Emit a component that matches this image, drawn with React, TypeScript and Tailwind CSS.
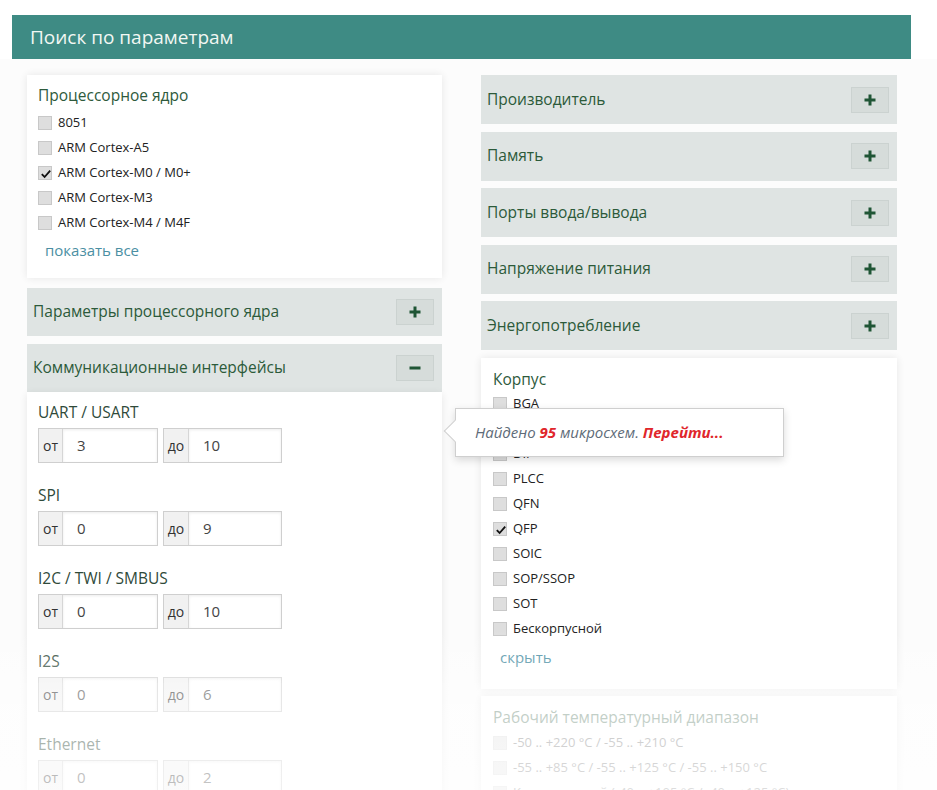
import React from 'react';

const font = { fontFamily: '"Open Sans", "Noto Sans", Arial, sans-serif' };

function Checkbox({ checked = false, faded = false }: { checked?: boolean; faded?: boolean }) {
  return (
    <span
      className={`relative inline-block w-[14px] h-[14px] shrink-0 border ${
        faded ? 'border-[#e0e0e0] bg-[#e8e8e8]' : 'border-[#c8c8c8] bg-[#dedede]'
      }`}
    >
      {checked && (
        <svg viewBox="0 0 14 14" className="absolute left-0 top-0 w-[14px] h-[14px]">
          <path d="M2.8 7.2 L5.6 10 L11.2 3.6" fill="none" stroke="#111" strokeWidth="1.8" />
        </svg>
      )}
    </span>
  );
}

function CheckItem({ label, checked, faded }: { label: string; checked?: boolean; faded?: boolean }) {
  return (
    <div className="flex items-center h-[25px] gap-[6px]">
      <Checkbox checked={checked} faded={faded} />
      <span className={`text-[13px] ${faded ? 'text-[#8f8f8f]' : 'text-[#222]'}`}>{label}</span>
    </div>
  );
}

function Bar({ title, open = false, h = 'h-[49px]' }: { title: string; open?: boolean; h?: string }) {
  return (
    <div className={`shrink-0 flex items-center justify-between bg-[#dfe4e3] ${h} pl-[6px] pr-[8px]`}>
      <span className="text-[15.5px] text-[#2c5a3a]">{title}</span>
      <button className="w-[38px] h-[26px] flex items-center justify-center bg-[#d6dcda] border border-[#cbd2d0]">
        <svg viewBox="0 0 12 12" className="w-[12px] h-[12px]">
          {!open && <rect x="4.5" y="0.5" width="3" height="11" fill="#1f5535" />}
          <rect x="0.5" y="4.5" width="11" height="3" fill="#1f5535" />
        </svg>
      </button>
    </div>
  );
}

function RangeRow({ label, from, to }: { label: string; from: string; to: string }) {
  return (
    <div className="pt-[9px]">
      <div className="text-[15.5px] leading-[20px] text-[#2f4a3a] h-[26px]">{label}</div>
      <div className="flex gap-[5px] pb-[13px]">
        <div className="flex h-[35px] w-[120px] border border-[#cfcfcf]">
          <span className="w-[24px] bg-[#f1f1f1] border-r border-[#d6d6d6] text-[14px] text-[#333] flex items-center justify-center">от</span>
          <span className="flex-1 bg-white shadow-[inset_0_1px_3px_rgba(0,0,0,0.08)] text-[15px] text-[#444] flex items-center pl-[14px]">{from}</span>
        </div>
        <div className="flex h-[35px] w-[119px] border border-[#cfcfcf]">
          <span className="w-[25px] bg-[#f1f1f1] border-r border-[#d6d6d6] text-[14px] text-[#333] flex items-center justify-center">до</span>
          <span className="flex-1 bg-white shadow-[inset_0_1px_3px_rgba(0,0,0,0.08)] text-[15px] text-[#444] flex items-center pl-[14px]">{to}</span>
        </div>
      </div>
    </div>
  );
}

export default function App() {
  return (
    <div style={font} className="relative w-[937px] h-[790px] overflow-hidden bg-white">
      <div className="ml-[12px] mt-[15px] w-[899px] h-[44px] bg-[#3e8b84] flex items-center pl-[18px]">
        <span className="text-[19px] text-[#f2f7f3]">Поиск по параметрам</span>
      </div>

      <div className="flex pl-[27px] gap-[39px] pt-[16px] bg-[#fcfcfc] h-[731px] overflow-hidden">
        {/* left column */}
        <div className="w-[415px] flex flex-col">
          <div className="shrink-0 bg-white shadow-[0_0_8px_rgba(0,0,0,0.09)] h-[203px] pl-[11px] pt-[8px]">
            <div className="text-[15.5px] text-[#2e5a3c] h-[27px] leading-[24px]">Процессорное ядро</div>
            <CheckItem label="8051" />
            <CheckItem label="ARM Cortex-A5" />
            <CheckItem label="ARM Cortex-M0 / M0+" checked />
            <CheckItem label="ARM Cortex-M3" />
            <CheckItem label="ARM Cortex-M4 / M4F" />
            <div className="pl-[7px] pt-[3px] text-[15px] text-[#4b8fa3] h-[25px] leading-[25px]">показать все</div>
          </div>

          <div className="shrink-0 mt-[10px]">
            <Bar title="Параметры процессорного ядра" h="h-[48px]" />
          </div>
          <div className="shrink-0 mt-[8px]">
            <Bar title="Коммуникационные интерфейсы" open h="h-[48px]" />
          </div>
          <div className="shrink-0 bg-white shadow-[0_2px_8px_rgba(0,0,0,0.09)] pl-[11px] pt-[1px] pb-[40px]">
            <RangeRow label="UART / USART" from="3" to="10" />
            <RangeRow label="SPI" from="0" to="9" />
            <RangeRow label="I2C / TWI / SMBUS" from="0" to="10" />
            <RangeRow label="I2S" from="0" to="6" />
            <RangeRow label="Ethernet" from="0" to="2" />
          </div>
        </div>

        {/* right column */}
        <div className="w-[416px] flex flex-col gap-[7.5px]">
          <Bar title="Производитель" />
          <Bar title="Память" />
          <Bar title="Порты ввода/вывода" />
          <Bar title="Напряжение питания" />
          <Bar title="Энергопотребление" />
          <div className="shrink-0 bg-white shadow-[0_0_8px_rgba(0,0,0,0.09)] h-[331px] pl-[12px] pt-[9px]">
            <div className="text-[15.5px] text-[#2e5a3c] h-[25px] leading-[24px]">Корпус</div>
            <CheckItem label="BGA" />
            <CheckItem label="CSP" />
            <CheckItem label="DIP" />
            <CheckItem label="PLCC" />
            <CheckItem label="QFN" />
            <CheckItem label="QFP" checked />
            <CheckItem label="SOIC" />
            <CheckItem label="SOP/SSOP" />
            <CheckItem label="SOT" />
            <CheckItem label="Бескорпусной" />
            <div className="pl-[7px] pt-[3px] text-[15px] text-[#4b8fa3] h-[25px] leading-[25px]">скрыть</div>
          </div>
          <div className="shrink-0 bg-white shadow-[0_0_8px_rgba(0,0,0,0.09)] h-[120px] pl-[12px] pt-[9px]">
            <div className="text-[15.5px] text-[#7f9a8a] h-[25px] leading-[24px]">Рабочий температурный диапазон</div>
            <CheckItem label="-50 .. +220 °C / -55 .. +210 °C" faded />
            <CheckItem label="-55 .. +85 °C / -55 .. +125 °C / -55 .. +150 °C" faded />
            <CheckItem label="Коммерческий (-40 .. +105 °C / -40 .. +125 °C)" faded />
          </div>
        </div>
      </div>

      {/* bottom fade */}
      <div className="absolute left-0 right-0 top-[630px] h-[53px] bg-gradient-to-b from-white/0 to-white/40" />
      <div className="absolute left-0 right-0 top-[683px] bottom-0 bg-gradient-to-b from-white/45 to-white/70" />

      {/* tooltip */}
      <div className="absolute left-[455px] top-[408px] w-[329px] h-[49px] bg-white border border-[#cfcfcf] shadow-[0_3px_8px_rgba(0,0,0,0.15)] flex items-center pl-[19px]">
        <span className="absolute left-[-9px] top-[14px] w-[16px] h-[16px] bg-white border-l border-b border-[#cfcfcf] rotate-45" />
        <span className="relative italic text-[15px] text-[#5e6b78]">
          Найдено <b className="text-[#e0262b]">95</b> микросхем. <b className="text-[#e0262b]">Перейти...</b>
        </span>
      </div>
    </div>
  );
}
